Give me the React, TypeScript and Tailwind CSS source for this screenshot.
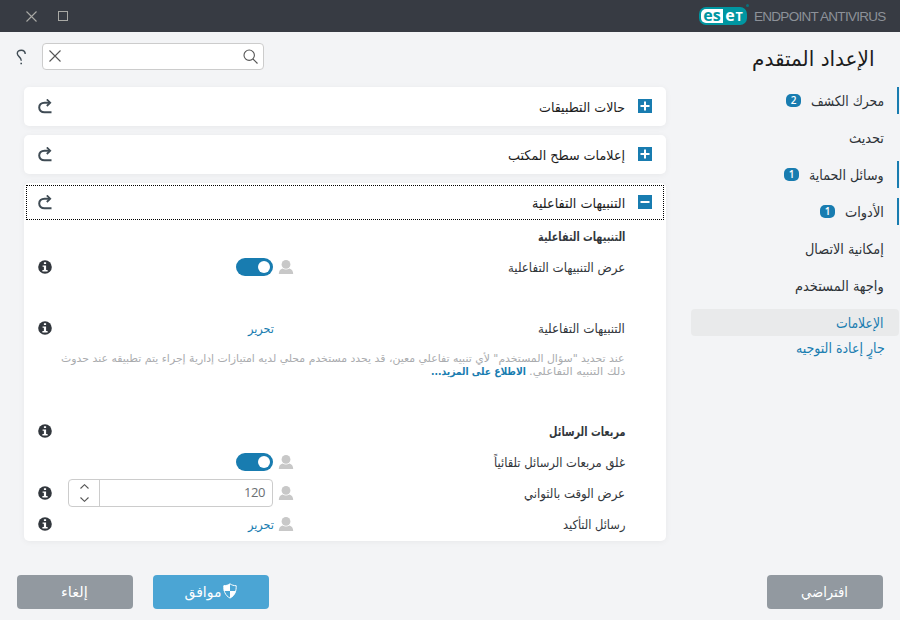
import React, { useLayoutEffect, useRef, useState } from "react";
import clsx from "clsx";

interface FitTextProps {
  width: number;
  children: React.ReactNode;
  className?: string;
}

// Keeps a label at its designed width whatever Arabic font is available
const FitText: React.FC<FitTextProps> = ({ width, children, className }) => {
  const ref = useRef<HTMLSpanElement>(null);
  const [scale, setScale] = useState(1);

  useLayoutEffect(() => {
    if (ref.current) setScale(width / ref.current.offsetWidth);
  }, [width]);

  return (
    <span className="inline-flex shrink-0" style={{ width }}>
      <span
        ref={ref}
        className={clsx("inline-block shrink-0 origin-right whitespace-nowrap", className)}
        style={{ transform: `scaleX(${scale})` }}
      >
        {children}
      </span>
    </span>
  );
};

const menu = [
  { label: "محرك الكشف", width: 73, badge: 2, bar: true },
  { label: "تحديث", width: 35 },
  { label: "وسائل الحماية", width: 75, badge: 1, bar: true },
  { label: "الأدوات", width: 39, badge: 1, bar: true },
  { label: "إمكانية الاتصال", width: 79 },
  { label: "واجهة المستخدم", width: 89 },
  { label: "الإعلامات", width: 48, active: true },
];

const UndoIcon = () => (
  <svg className="h-[15px] w-[15px]" viewBox="0 0 15 15" fill="none" stroke="#3f4b54" strokeWidth="2">
    <path d="M13.500 13.300H6.500C3.300 13.300 1.200 11.200 1.200 8.500S3.300 3.700 6.500 3.700h5.500" />
    <path d="M8.800.4l3.400 3.300-3.400 3.300" strokeWidth="1.800" />
  </svg>
);

const InfoIcon = () => (
  <svg className="h-[14px] w-[14px]" viewBox="0 0 14 14">
    <circle cx="7" cy="7" r="6.8" fill="#32373d" />
    <path d="M5.900 2.200h2.200v1.900H5.900zM4.600 5.400h3.500v4.600h1.500v1.400H4.400V10h1.500V6.700H4.600z" fill="#fff" />
  </svg>
);

const UserIcon = () => (
  <svg className="h-[14px] w-4" viewBox="0 0 16 14" fill="#c8c8c8">
    <circle cx="8" cy="4.400" r="4.400" />
    <path d="M.8 14c0-3.300 1.500-5 3.800-5.600 2.100 1.300 4.700 1.300 6.800 0 2.300.6 3.800 2.300 3.800 5.600z" />
  </svg>
);

const Toggle = () => (
  <span className="flex h-[18px] w-[37px] items-center justify-start rounded-full bg-[#187cb0] pr-[3px]">
    <span className="h-3 w-3 rounded-full bg-white" />
  </span>
);

const EditLink = () => (
  <span className="mt-[3px] -mr-px text-[12.5px] text-[#187cb0]">
    <FitText width={26}>تحرير</FitText>
  </span>
);

const Spinner = () => (
  <div className="flex h-7 w-[205px] items-stretch rounded-[4px] border border-[#ccc] bg-white">
    <span dir="ltr" className="flex flex-1 items-center justify-end pt-px pr-[7px] text-[13px] tracking-[-0.4px] text-[#6b6f73] [font-family:'Open_Sans',sans-serif]">
      120
    </span>
    <span className="flex w-[31px] flex-col items-center justify-center gap-2 border-r border-[#ccc]">
      <svg className="h-[5px] w-[9px]" viewBox="0 0 9 5" fill="none" stroke="#555" strokeWidth="1.1">
        <path d="M.5 4.500 4.500.7l4 3.800" />
      </svg>
      <svg className="h-[5px] w-[9px]" viewBox="0 0 9 5" fill="none" stroke="#555" strokeWidth="1.1">
        <path d="M.5.5l4 3.800 4-3.800" />
      </svg>
    </span>
  </div>
);

interface RowProps {
  label: string;
  width: number;
  bold?: boolean;
  user?: boolean;
  info?: boolean;
  children?: React.ReactNode;
}

const Row: React.FC<RowProps> = ({ label, width, bold, user, info, children }) => (
  <div className="flex h-[31px] items-center pr-[41px] pl-[14px]">
    <div className={clsx("w-[331px] pt-[3px] text-[12.5px] text-[#33373c]", bold && "font-bold")}>
      <FitText width={width}>{label}</FitText>
    </div>
    <div className="w-4">{user && <UserIcon />}</div>
    <div className="mr-[5px] flex w-[205px] items-center">{children}</div>
    <div className="mr-4 w-[14px]">{info && <InfoIcon />}</div>
  </div>
);

const SectionHeader: React.FC<{ label: string; width: number; open?: boolean }> = ({ label, width, open }) => (
  <div className="flex h-full items-center">
    <span className="mb-px flex h-[14px] w-[14px] items-center justify-center bg-[#187cb0]">
      <svg className="h-[10px] w-[10px]" viewBox="0 0 10 10" stroke="#fff" strokeWidth="2">
        <path d={open ? "M.5 5h9" : "M.5 5h9M5 .5v9"} />
      </svg>
    </span>
    <span className="mr-[13px] flex-1 pt-[2px] text-[13.5px] text-[#1c1c1c]">
      <FitText width={width}>{label}</FitText>
    </span>
    <UndoIcon />
  </div>
);

const Sidebar = () => (
  <aside className="flex w-[209px] flex-col pr-px">
    <h1 className="flex h-[55px] items-center pr-6 text-[20.5px] text-[#1c1c1c]">
      <FitText width={123}>الإعداد المتقدم</FitText>
    </h1>
    <nav className="flex flex-col gap-[10px]">
      {menu.map((item) => (
        <div
          key={item.label}
          className={clsx(
            "flex h-[27px] items-center text-[14px]",
            item.active ? "rounded-[4px] bg-[#e9eaeb] text-[#187cb0]" : "text-[#2e3338]",
            item.bar ? "border-r-2 border-[#187cb0] pr-[13px]" : "pr-[15px]"
          )}
        >
          <span className="flex pt-[2px]">
            <FitText width={item.width}>{item.label}</FitText>
          </span>
          {item.badge && (
            <span className="mr-[10px] flex h-[13px] w-[15px] items-center justify-center rounded-[5px] bg-[#187cb0] text-[10px] font-semibold text-white [font-family:'Open_Sans',sans-serif]">
              {item.badge}
            </span>
          )}
        </div>
      ))}
    </nav>
    <div className="flex h-6 items-center pr-[14px] text-[14px] text-[#187cb0]">
      <FitText width={89}>جارٍ إعادة التوجيه</FitText>
    </div>
  </aside>
);

const Card: React.FC<{ className: string; children: React.ReactNode }> = ({ className, children }) => (
  <section className={clsx("rounded-[5px] bg-white shadow-[0_1px_6px_rgba(0,0,0,0.05)]", className)}>
    {children}
  </section>
);

const Logo = () => (
  <span className="relative flex h-[18px] w-[48px] items-center rounded-[7px] bg-[#0096a1] p-[2px] text-[16px] font-bold [font-family:'Open_Sans',sans-serif]">
    <span className="flex h-full w-[22px] justify-center rounded-l-[5px] bg-white leading-[13px] text-[#0096a1]">
      es
    </span>
    <span className="flex h-full w-[22px] items-baseline justify-center gap-px leading-[13px] text-white">
      <span>e</span>
      <span className="text-[12.5px]">T</span>
    </span>
    <span className="absolute -top-[3px] -right-[2px] h-[3px] w-[3px] rounded-full bg-[#0b6f79]" />
  </span>
);

export default function App() {
  return (
    <div dir="rtl" className="flex h-[620px] w-[900px] flex-col overflow-hidden bg-[#f3f4f6] [font-family:'DejaVu_Sans',sans-serif]">
      <header dir="ltr" className="flex h-8 items-center bg-[#373b43] pr-[15px] pl-[26px]">
        <svg className="h-[11px] w-[11px]" viewBox="0 0 11 11" stroke="#a9a9a5" strokeWidth="1.1">
          <path d="M.5.5l10 10M10.500.5l-10 10" />
        </svg>
        <span className="ml-[21px] h-[10px] w-[10px] border border-[#a9a9a5]" />
        <span className="flex-1" />
        <Logo />
        <span className="-mr-px ml-[7px] w-[132px] pt-[3px] text-[13.5px] tracking-[-0.72px] whitespace-nowrap text-[#8d9299] [font-family:'Liberation_Sans',sans-serif]">
          ENDPOINT ANTIVIRUS
        </span>
      </header>

      <div className="flex h-[510px]">
        <Sidebar />
        <main className="flex flex-1 flex-col pr-[25px] pl-6">
          <div className="mt-[11px] -ml-2 flex h-[27px] items-center justify-end">
            <div className="flex h-[27px] w-[222px] items-center justify-between rounded-[4px] border border-[#ccc] bg-white pr-[5px] pb-px pl-[6px]">
              <svg className="h-[15px] w-[15px]" viewBox="0 0 15 15" fill="none" stroke="#555" strokeWidth="1.1">
                <circle cx="6.200" cy="6.200" r="5.200" />
                <path d="M10 10l4.500 4.500" />
              </svg>
              <svg className="h-[12px] w-[12px]" viewBox="0 0 12 12" stroke="#555" strokeWidth="1.1">
                <path d="M.5.5l11 11M11.500.5l-11 11" />
              </svg>
            </div>
            <svg className="mr-4 h-4 w-[10px]" viewBox="0 0 10 16" fill="none" stroke="#3f4b54" strokeWidth="1.4">
              <path d="M9.200 5C9.200 2.400 7.500 1.200 5.300 1.200 3 1.200 1.300 2.400 1.300 4.600c0 3.200 4 2.900 4 7.200" />
              <path d="M4.400 14.500H6" strokeWidth="1.600" />
            </svg>
          </div>

          <Card className="mt-[17px] h-[39px] px-[14px]">
            <SectionHeader label="حالات التطبيقات" width={86} />
          </Card>
          <Card className="mt-[9px] h-[39px] px-[14px]">
            <SectionHeader label="إعلامات سطح المكتب" width={117} />
          </Card>
          <Card className="mt-[9px] h-[358px] pt-[2px]">
            <div className="mx-[2px] h-[35px] border border-dotted border-black px-[11px]">
              <SectionHeader label="التنبيهات التفاعلية" width={93} open />
            </div>
            <div>
              <Row label="التنبيهات التفاعلية" width={87} bold />
              <Row label="عرض التنبيهات التفاعلية" width={117} user info>
                <Toggle />
              </Row>
            </div>
            <div className="mt-[30px]">
              <Row label="التنبيهات التفاعلية" width={87} info>
                <EditLink />
              </Row>
              <p className="mt-[9px] flex flex-col pr-[41px] text-[10.5px] leading-[13px] text-[#a9abae]">
                <FitText width={564}>
                  عند تحديد "سؤال المستخدم" لأي تنبيه تفاعلي معين، قد يحدد مستخدم محلي لديه امتيازات إدارية إجراء يتم تطبيقه عند حدوث
                </FitText>
                <span className="flex gap-[3px]">
                  <FitText width={96}>ذلك التنبيه التفاعلي.</FitText>
                  <FitText width={95} className="font-bold text-[#187cb0]">
                    الاطلاع على المزيد...
                  </FitText>
                </span>
              </p>
            </div>
            <div className="mt-[37px]">
              <Row label="مربعات الرسائل" width={76} bold info />
              <Row label="غلق مربعات الرسائل تلقائياً" width={131} user>
                <Toggle />
              </Row>
              <Row label="عرض الوقت بالثواني" width={101} user info>
                <Spinner />
              </Row>
              <Row label="رسائل التأكيد" width={62} user info>
                <EditLink />
              </Row>
            </div>
          </Card>
        </main>
      </div>

      <footer className="mt-[33px] flex h-[34px] items-center pr-[17px] pl-[17px] text-[14px] text-white">
        <button className="flex h-full w-[116px] items-center justify-center rounded-[4px] bg-[#9299a0] pt-px pr-px">
          <FitText width={47}>افتراضي</FitText>
        </button>
        <span className="flex-1" />
        <button className="flex h-full w-[116px] items-center justify-center gap-[1px] rounded-[4px] bg-[#4ba5d4] pt-px pr-px">
          <svg className="mb-[3px] h-4 w-[14px]" viewBox="0 0 14 16">
            <path d="M7 .8c1.800 1.300 3.800 1.900 6.200 1.900.2 5.400-1.300 9.700-6.200 12.400C2.100 12.400.6 8.100.8 2.700 3.200 2.700 5.200 2.100 7 .8z" fill="none" stroke="#fff" />
            <path d="M7 .8v7.200H.8V2.700C3.200 2.700 5.200 2.100 7 .8zM7 8h5.800c-.7 3-2.500 5.500-5.800 7.100z" fill="#fff" />
          </svg>
          <FitText width={37}>موافق</FitText>
        </button>
        <button className="mr-5 flex h-full w-[116px] items-center justify-center rounded-[4px] bg-[#9299a0] pt-px pr-px">
          <FitText width={27}>إلغاء</FitText>
        </button>
      </footer>
    </div>
  );
}
